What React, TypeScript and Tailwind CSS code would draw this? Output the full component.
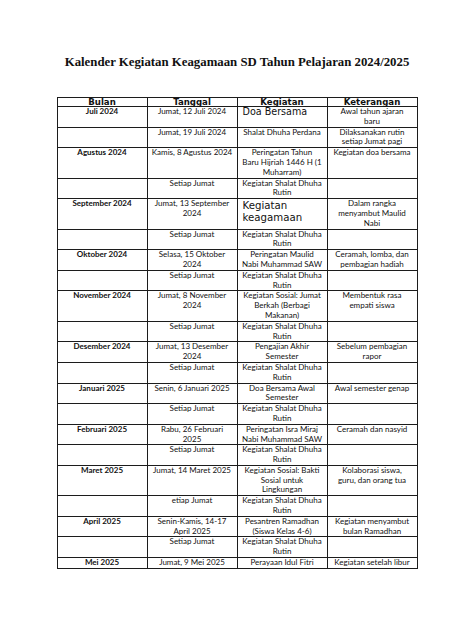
import React from "react";

type Row = {
	bulan: string;
	tanggal: string[];
	kegiatan: string[];
	keterangan: string[];
	big?: boolean;
};

const rutin = ["Kegiatan Shalat Dhuha", "Rutin"];

const rows: Row[] = [
	{ bulan: "Juli 2024", tanggal: ["Jumat, 12 Juli 2024"], kegiatan: ["Doa Bersama"], keterangan: ["Awal tahun ajaran", "baru"], big: true },
	{ bulan: "", tanggal: ["Jumat, 19 Juli 2024"], kegiatan: ["Shalat Dhuha Perdana"], keterangan: ["Dilaksanakan rutin", "setiap Jumat pagi"] },
	{ bulan: "Agustus 2024", tanggal: ["Kamis, 8 Agustus 2024"], kegiatan: ["Peringatan Tahun", "Baru Hijriah 1446 H (1", "Muharram)"], keterangan: ["Kegiatan doa bersama"] },
	{ bulan: "", tanggal: ["Setiap Jumat"], kegiatan: rutin, keterangan: [] },
	{ bulan: "September 2024", tanggal: ["Jumat, 13 September", "2024"], kegiatan: ["Kegiatan", "keagamaan"], keterangan: ["Dalam rangka", "menyambut Maulid", "Nabi"], big: true },
	{ bulan: "", tanggal: ["Setiap Jumat"], kegiatan: rutin, keterangan: [] },
	{ bulan: "Oktober 2024", tanggal: ["Selasa, 15 Oktober", "2024"], kegiatan: ["Peringatan Maulid", "Nabi Muhammad SAW"], keterangan: ["Ceramah, lomba, dan", "pembagian hadiah"] },
	{ bulan: "", tanggal: ["Setiap Jumat"], kegiatan: rutin, keterangan: [] },
	{ bulan: "November 2024", tanggal: ["Jumat, 8 November", "2024"], kegiatan: ["Kegiatan Sosial: Jumat", "Berkah (Berbagi", "Makanan)"], keterangan: ["Membentuk rasa", "empati siswa"] },
	{ bulan: "", tanggal: ["Setiap Jumat"], kegiatan: rutin, keterangan: [] },
	{ bulan: "Desember 2024", tanggal: ["Jumat, 13 Desember", "2024"], kegiatan: ["Pengajian Akhir", "Semester"], keterangan: ["Sebelum pembagian", "rapor"] },
	{ bulan: "", tanggal: ["Setiap Jumat"], kegiatan: rutin, keterangan: [] },
	{ bulan: "Januari 2025", tanggal: ["Senin, 6 Januari 2025"], kegiatan: ["Doa Bersama Awal", "Semester"], keterangan: ["Awal semester genap"] },
	{ bulan: "", tanggal: ["Setiap Jumat"], kegiatan: rutin, keterangan: [] },
	{ bulan: "Februari 2025", tanggal: ["Rabu, 26 Februari", "2025"], kegiatan: ["Peringatan Isra Miraj", "Nabi Muhammad SAW"], keterangan: ["Ceramah dan nasyid"] },
	{ bulan: "", tanggal: ["Setiap Jumat"], kegiatan: rutin, keterangan: [] },
	{ bulan: "Maret 2025", tanggal: ["Jumat, 14 Maret 2025"], kegiatan: ["Kegiatan Sosial: Bakti", "Sosial untuk", "Lingkungan"], keterangan: ["Kolaborasi siswa,", "guru, dan orang tua"] },
	{ bulan: "", tanggal: ["etiap Jumat"], kegiatan: rutin, keterangan: [] },
	{ bulan: "April 2025", tanggal: ["Senin-Kamis, 14-17", "April 2025"], kegiatan: ["Pesantren Ramadhan", "(Siswa Kelas 4-6)"], keterangan: ["Kegiatan menyambut", "bulan Ramadhan"] },
	{ bulan: "", tanggal: ["Setiap Jumat"], kegiatan: rutin, keterangan: [] },
	{ bulan: "Mei 2025", tanggal: ["Jumat, 9 Mei 2025"], kegiatan: ["Perayaan Idul Fitri"], keterangan: ["Kegiatan setelah libur"] },
];

const Lines = ({ lines }: { lines: string[] }) => (
	<>
		{lines.map((l, i) => (
			<div key={i} className="whitespace-nowrap">
				{l}
			</div>
		))}
	</>
);

const cell = "border border-[#1c1c1c] px-[2px] py-0 align-top text-center";

export default function App() {
	return (
		<div className="w-full min-h-[632px] bg-white flex flex-col items-center text-[#111]">
			<h1 className="pt-[54px] text-[12.8px] leading-[16px] font-bold font-['Liberation_Serif',serif]">
				Kalender Kegiatan Keagamaan SD Tahun Pelajaran 2024/2025
			</h1>
			<table className="mt-[27px] w-[360px] table-fixed border-collapse font-['Lato',sans-serif] text-[8px] leading-[9.8px]">
				<colgroup>
					<col className="w-[90px]" />
					<col className="w-[90px]" />
					<col className="w-[90px]" />
					<col className="w-[90px]" />
				</colgroup>
				<thead>
					<tr className="font-['DejaVu_Sans',sans-serif] font-bold text-[8.6px] leading-[8px]">
						<th className={cell}>Bulan</th>
						<th className={cell}>Tanggal</th>
						<th className={cell}>Kegiatan</th>
						<th className={cell}>Keterangan</th>
					</tr>
				</thead>
				<tbody>
					{rows.map((r, i) => (
						<tr key={i}>
							<td className={cell + " font-bold"}>{r.bulan}</td>
							<td className={cell}>
								<Lines lines={r.tanggal} />
							</td>
							{r.big ? (
								<td className={cell + " !text-left pl-[5px]"}>
									<div
										className={
											r.kegiatan.length > 1
												? "font-['DejaVu_Sans',sans-serif] text-[10.2px] leading-[11.5px] pt-[1px]"
												: "font-['DejaVu_Sans',sans-serif] text-[9.6px] leading-[10px]"
										}
									>
										<Lines lines={r.kegiatan} />
									</div>
								</td>
							) : (
								<td className={cell}>
									<Lines lines={r.kegiatan} />
								</td>
							)}
							<td className={cell}>
								<Lines lines={r.keterangan} />
							</td>
						</tr>
					))}
				</tbody>
			</table>
		</div>
	);
}
